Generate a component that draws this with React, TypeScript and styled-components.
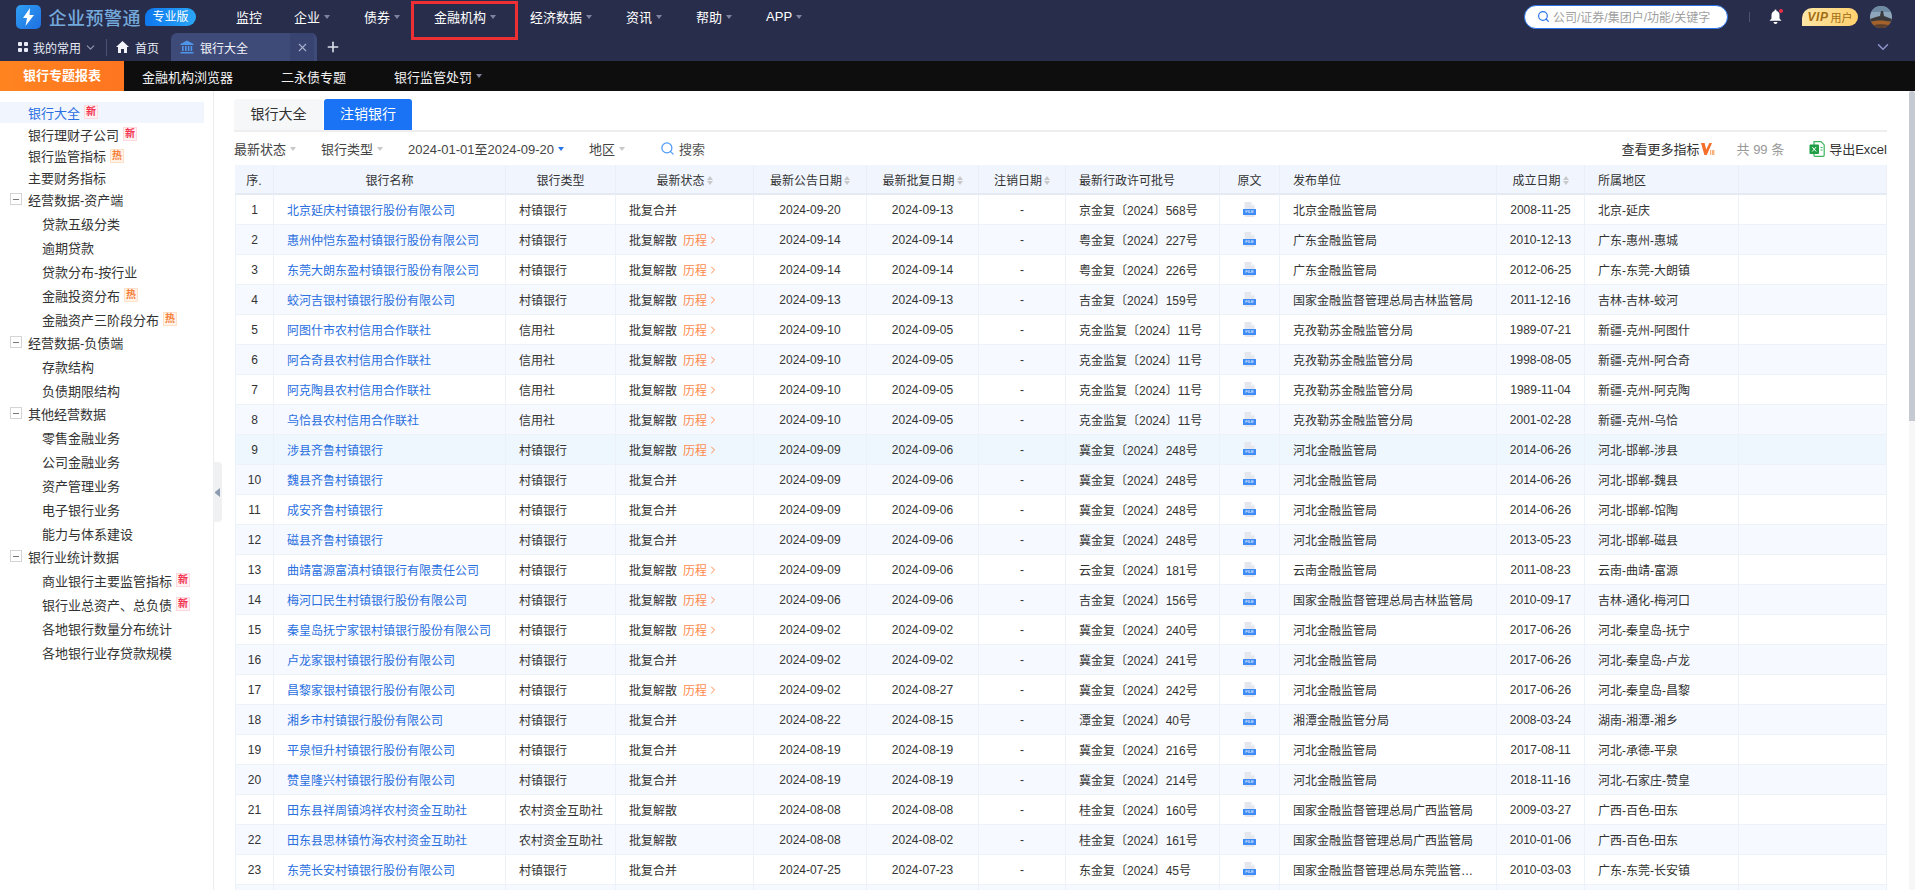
import React from "react";
import styled, { createGlobalStyle } from "styled-components";
import { ChevronDown, Plus, Search, X, ChevronRight } from "lucide-react";

const GlobalStyle = createGlobalStyle`
  *, *::before, *::after { box-sizing: border-box; }
  html, body { margin: 0; padding: 0; height: 100%; overflow: hidden; background: #fff; }
  body {
    font-family: "Liberation Sans", "Noto Sans CJK SC", sans-serif;
    font-size: 12px;
    color: #333;
  }
`;

const Page = styled.div`
  display: flex;
  flex-direction: column;
  height: 890px;
  overflow: hidden;
`;

const Header = styled.header`
  height: 61px;
  flex: none;
  background: #282d4b;
  display: flex;
  flex-direction: column;
`;

const TopRow = styled.div`
  height: 33px;
  display: flex;
  align-items: center;
  padding: 0 23px 0 16px;
`;

const Brand = styled.div`
  width: 180px;
  display: flex;
  align-items: center;
  margin-right: 40px;
`;

const LogoMark = styled.div`
  width: 25px;
  height: 24px;
  border-radius: 5px;
  background: linear-gradient(135deg, #2f9ff2, #1e6fe2);
  display: flex;
  align-items: center;
  justify-content: center;
  margin-right: 8px;
`;

const BrandName = styled.span`
  font-size: 18px;
  font-weight: 500;
  color: #74a9dc;
  letter-spacing: 0.5px;
  margin-right: 4px;
  white-space: nowrap;
`;

const Edition = styled.span`
  width: 52px;
  height: 18px;
  border-radius: 9px 9px 9px 2px;
  background: linear-gradient(90deg, #0e77ef, #2aa6f5);
  color: #fff;
  font-size: 12px;
  line-height: 18px;
  text-align: center;
`;

const NavItem = styled.div<{ $plain?: boolean; $boxed?: boolean }>`
  position: relative;
  display: flex;
  align-items: center;
  color: #fff;
  font-size: 13px;
  padding-right: ${(p) => (p.$plain ? "32px" : "34px")};
  ${(p) =>
    p.$boxed &&
    `&::after {
      content: "";
      position: absolute;
      left: -23px;
      top: -6px;
      width: 107px;
      height: 39px;
      border: 3px solid #ee2f34;
    }`}
`;

const Caret = styled.i<{ $color?: string }>`
  display: inline-block;
  width: 0;
  height: 0;
  margin-left: 4px;
  border-left: 3px solid transparent;
  border-right: 3px solid transparent;
  border-top: 4px solid ${(p) => p.$color || "#7e849e"};
  flex: none;
`;

const SearchBox = styled.div`
  margin-left: auto;
  width: 204px;
  height: 24px;
  border: 1.5px solid #2a74ea;
  border-radius: 12px;
  background: #fff;
  display: flex;
  align-items: center;
  padding-left: 12px;
  color: #a0a0a0;
  font-size: 12px;
  gap: 3px;
  white-space: nowrap;
`;

const HeadDivider = styled.span`
  width: 1px;
  height: 10px;
  background: #4a5278;
  margin: 0 19px 0 21px;
`;

const BellWrap = styled.span`
  position: relative;
  width: 13px;
  height: 16px;
  display: flex;
  margin-right: 20px;
  &::after {
    content: "";
    position: absolute;
    right: -1px;
    top: 0;
    width: 4px;
    height: 4px;
    border-radius: 50%;
    background: #f0304a;
  }
`;

const VipTag = styled.span`
  width: 56px;
  height: 18px;
  border-radius: 10px 9px 9px 0;
  background: linear-gradient(100deg, #ffe7a8, #ffd06c);
  color: #a26c12;
  display: flex;
  align-items: center;
  justify-content: center;
  gap: 2px;
  font-size: 11px;
  margin-right: 12px;
`;

const VipWord = styled.b`
  font-size: 12px;
  font-style: italic;
  letter-spacing: 0.5px;
`;

const TabRow = styled.div`
  height: 28px;
  display: flex;
  align-items: stretch;
  padding: 0 23px 0 18px;
  color: #e8ebf5;
  font-size: 12px;
`;

const TabLink = styled.div`
  display: flex;
  align-items: center;
`;

const GridIcon = styled.span`
  width: 10px;
  height: 10px;
  display: grid;
  grid-template-columns: 4px 4px;
  grid-auto-rows: 4px;
  gap: 2px;
  margin-right: 5px;
  & > i {
    background: #e8ebf5;
    border-radius: 1px;
  }
`;

const TabDivider = styled.span`
  align-self: center;
  width: 1px;
  height: 17px;
  background: #4a5278;
  margin: 0 9px 0 9px;
`;

const OpenTab = styled.div`
  width: 146px;
  margin-left: 12px;
  padding: 0 0 0 9px;
  border-radius: 6px 6px 0 0;
  background: #3e4a78;
  display: flex;
  align-items: center;
  gap: 6px;
  color: #f2f4fa;
`;

const TabClose = styled.span`
  margin-left: auto;
  width: 24px;
  height: 28px;
  display: flex;
  align-items: center;
  justify-content: center;
  color: #a9b1cd;
  margin-right: 3px;
  background: #384370;
`;

const AddTab = styled.span`
  display: flex;
  align-items: center;
  margin-left: 8px;
  color: #dfe2ee;
`;

const Collapse = styled.span`
  margin-left: auto;
  display: flex;
  align-items: center;
  color: #8d97cc;
`;

const SubBar = styled.nav`
  height: 30px;
  flex: none;
  background: #0e0e0e;
  display: flex;
  align-items: center;
  color: #f1f1f1;
  font-size: 13px;
`;

const SubActive = styled.div`
  width: 124px;
  height: 30px;
  background: linear-gradient(90deg, #ff8420, #ff7520);
  color: #fff;
  font-weight: 700;
  line-height: 30px;
  text-align: center;
  margin-right: 18px;
`;

const SubItem = styled.div<{ $gap?: number }>`
  display: flex;
  align-items: center;
  margin-right: ${(p) => p.$gap || 0}px;
`;

const Main = styled.div`
  flex: 1;
  min-height: 0;
  display: flex;
`;

const Sidebar = styled.aside`
  position: relative;
  width: 214px;
  flex: none;
  padding-top: 10.5px;
  border-right: 1px solid #ececec;
  font-size: 13px;
  color: #333;
`;

const Handle = styled.div`
  position: absolute;
  left: 100%;
  top: 371px;
  width: 9px;
  height: 60px;
  background: #f0f1f3;
  border-radius: 0 4px 4px 0;
  display: flex;
  align-items: center;
  justify-content: center;
  &::before {
    content: "";
    width: 5px;
    height: 9px;
    border-top: 4.5px solid transparent;
    border-bottom: 4.5px solid transparent;
    border-right: 5px solid #8c9bb0;
  }
`;

const TopItem = styled.div<{ $active?: boolean }>`
  height: 21.7px;
  width: 204px;
  display: flex;
  align-items: center;
  padding-left: 28px;
  background: ${(p) => (p.$active ? "#f1f5fe" : "transparent")};
  color: ${(p) => (p.$active ? "#2a6fe0" : "#333")};
`;

const GroupItem = styled.div`
  height: 21.7px;
  display: flex;
  align-items: center;
  padding-left: 10px;
`;

const Expander = styled.span`
  width: 12px;
  height: 12px;
  border: 1px solid #d4d4d4;
  margin-right: 6px;
  display: flex;
  align-items: center;
  justify-content: center;
  &::before {
    content: "";
    width: 6px;
    height: 1px;
    background: #777;
  }
`;

const ChildList = styled.div`
  padding-top: 1.3px;
`;

const ChildItem = styled.div`
  height: 24px;
  display: flex;
  align-items: center;
  padding-left: 42px;
`;

const Flag = styled.span<{ $hot?: boolean }>`
  width: 14px;
  height: 14px;
  margin-left: 4px;
  font-size: 10px;
  line-height: 12px;
  text-align: center;
  font-weight: 700;
  border: 1px solid ${(p) => (p.$hot ? "#ffe0c8" : "#ffd9de")};
  background: ${(p) => (p.$hot ? "#fff3e8" : "#fff0f2")};
  color: ${(p) => (p.$hot ? "#f4803a" : "#f2324f")};
`;

const Content = styled.section`
  flex: 1;
  min-width: 0;
  padding: 8px 22px 0 20px;
`;

const ViewTabs = styled.div`
  display: flex;
  height: 33px;
  gap: 1px;
  border-bottom: 2px solid #eee;
`;

const ViewTab = styled.div<{ $on?: boolean }>`
  width: ${(p) => (p.$on ? "88px" : "89px")};
  height: 31px;
  line-height: 31px;
  text-align: center;
  font-size: 14px;
  border-radius: 3px 3px 0 0;
  background: ${(p) => (p.$on ? "#1a73f5" : "#f6f7f9")};
  color: ${(p) => (p.$on ? "#fff" : "#333")};
`;

const Filters = styled.div`
  height: 33px;
  display: flex;
  align-items: center;
  font-size: 13px;
  color: #444;
`;

const Filter = styled.div`
  display: flex;
  align-items: center;
  margin-right: 25px;
`;

const SearchLink = styled.div`
  display: flex;
  align-items: center;
  gap: 4px;
  margin-left: 10px;
  color: #555;
`;

const FilterEnd = styled.div`
  margin-left: auto;
  display: flex;
  align-items: center;
  color: #333;
`;

const MoreLink = styled.span`
  display: flex;
  align-items: center;
  gap: 1px;
  margin-right: 22px;
`;

const Total = styled.span`
  color: #999;
  margin-right: 25px;
`;

const ExportLink = styled.span`
  display: flex;
  align-items: center;
  gap: 4px;
`;

const Table = styled.table`
  width: 1652px;
  margin-left: 1px;
  table-layout: fixed;
  border-collapse: separate;
  border-spacing: 0;
  font-size: 12px;
`;

const HeadCell = styled.th<{ $left?: boolean }>`
  height: 30px;
  padding: 0 ${(p) => (p.$left ? "13px" : "4px")};
  font-weight: 400;
  color: #333;
  background: #f1f6fe;
  text-align: ${(p) => (p.$left ? "left" : "center")};
  border-right: 1px solid #e9eef7;
  border-bottom: 2px solid #e4e9f2;
  white-space: nowrap;
`;

const Sort = styled.span`
  display: inline-flex;
  flex-direction: column;
  gap: 1px;
  margin-left: 2px;
  vertical-align: middle;
  position: relative;
  top: -1px;
  &::before, &::after {
    content: "";
    width: 6px;
    height: 4px;
    border-left: 3px solid transparent;
    border-right: 3px solid transparent;
  }
  &::before { border-bottom: 4px solid #c8c8c8; }
  &::after { border-top: 4px solid #c8c8c8; }
`;

const Row = styled.tr<{ $alt?: boolean; $hover?: boolean }>`
  background: ${(p) => (p.$hover ? "#eef7fd" : p.$alt ? "#f6f9ff" : "#fff")};
`;

const Cell = styled.td<{ $center?: boolean }>`
  height: 30px;
  padding: ${(p) => (p.$center ? "0 2px" : "0 12px 0 13px")};
  overflow: hidden;
  white-space: nowrap;
  text-overflow: ellipsis;
  color: #333;
  text-align: ${(p) => (p.$center ? "center" : "left")};
  border-right: 1px solid #edf1f8;
  border-bottom: 1px solid #edf1f8;
  &:first-child { border-left: 1px solid #edf1f8; }
`;

const BankLink = styled.a`
  color: #2a6fe0;
  text-decoration: none;
`;

const Trail = styled.span`
  display: inline-flex;
  align-items: center;
  margin-left: 6px;
  color: #ff8a4c;
  vertical-align: top;
`;

const ScrollTrack = styled.div`
  width: 6px;
  flex: none;
  margin-left: auto;
  background: #f7f7f7;
`;

const ScrollThumb = styled.div`
  height: 330px;
  background: #c4c9d2;
  border-radius: 3px 3px 0 0;
`;

const Avatar = () => (
  <svg width="22" height="22" viewBox="0 0 22 22">
    <defs>
      <clipPath id="avatar-clip">
        <circle cx="11" cy="11" r="11" />
      </clipPath>
    </defs>
    <g clipPath="url(#avatar-clip)">
      <rect width="22" height="22" fill="#8fa7ba" />
      <rect y="0" width="22" height="6" fill="#6f8ba3" />
      <path d="M0 13l6-2 4-1 1-5 2 0 1 5 8 3v9H0z" fill="#3a3a3c" />
      <path d="M0 16c5-2 14-2 22 0v6H0z" fill="#a3622c" />
      <path d="M4 19c4-1 10-1 14 0v3H4z" fill="#5a3f2e" />
    </g>
  </svg>
);

const FileIcon = () => (
  <svg width="13" height="15" viewBox="0 0 13 15" style={{ verticalAlign: "middle" }}>
    <path d="M1.5 0h6.5l3.5 3.5v10.7a.8.8 0 0 1-.8.8H2.3a.8.8 0 0 1-.8-.8z" fill="#e4e7ed" />
    <path d="M8 0l3.5 3.5H8z" fill="#f6f7f9" />
    <rect x="0" y="7" width="13" height="6" fill="#3f8cf6" />
    <text x="6.5" y="11.4" textAnchor="middle" fontSize="4" fill="#fff" fontFamily="Liberation Sans">FILE</text>
  </svg>
);

const sidebar = [
  { label: "银行大全", flag: "新", active: true },
  { label: "银行理财子公司", flag: "新" },
  { label: "银行监管指标", flag: "热" },
  { label: "主要财务指标" },
  {
    label: "经营数据-资产端",
    children: [
      { label: "贷款五级分类" },
      { label: "逾期贷款" },
      { label: "贷款分布-按行业" },
      { label: "金融投资分布", flag: "热" },
      { label: "金融资产三阶段分布", flag: "热" },
    ],
  },
  { label: "经营数据-负债端", children: [{ label: "存款结构" }, { label: "负债期限结构" }] },
  {
    label: "其他经营数据",
    children: [
      { label: "零售金融业务" },
      { label: "公司金融业务" },
      { label: "资产管理业务" },
      { label: "电子银行业务" },
      { label: "能力与体系建设" },
    ],
  },
  {
    label: "银行业统计数据",
    children: [
      { label: "商业银行主要监管指标", flag: "新" },
      { label: "银行业总资产、总负债", flag: "新" },
      { label: "各地银行数量分布统计" },
      { label: "各地银行业存贷款规模" },
    ],
  },
];

const columns = [
  { w: 39, t: "序." },
  { w: 232, t: "银行名称" },
  { w: 110, t: "银行类型" },
  { w: 138, t: "最新状态", sort: true },
  { w: 113, t: "最新公告日期", sort: true },
  { w: 112, t: "最新批复日期", sort: true },
  { w: 87, t: "注销日期", sort: true },
  { w: 154, t: "最新行政许可批号", left: true },
  { w: 60, t: "原文" },
  { w: 217, t: "发布单位", left: true },
  { w: 88, t: "成立日期", sort: true },
  { w: 154, t: "所属地区", left: true },
  { w: 148, t: "", left: true },
];

const V = "村镇银行";
const C = "信用社";
const M = "农村资金互助社";
const HE = "河北金融监管局";
const KZ = "克孜勒苏金融监管分局";
const JL = "国家金融监督管理总局吉林监管局";
const GX = "国家金融监督管理总局广西监管局";
const MERGE = "批复合并";
const CLOSE = "批复解散";

// name, type, status, has history link, notice, approval, permit, publisher, founded, region
const rows: [string, string, string, boolean, string, string, string, string, string, string][] = [
  ["北京延庆村镇银行股份有限公司", V, MERGE, false, "2024-09-20", "2024-09-13", "京金复〔2024〕568号", "北京金融监管局", "2008-11-25", "北京-延庆"],
  ["惠州仲恺东盈村镇银行股份有限公司", V, CLOSE, true, "2024-09-14", "2024-09-14", "粤金复〔2024〕227号", "广东金融监管局", "2010-12-13", "广东-惠州-惠城"],
  ["东莞大朗东盈村镇银行股份有限公司", V, CLOSE, true, "2024-09-14", "2024-09-14", "粤金复〔2024〕226号", "广东金融监管局", "2012-06-25", "广东-东莞-大朗镇"],
  ["蛟河吉银村镇银行股份有限公司", V, CLOSE, true, "2024-09-13", "2024-09-13", "吉金复〔2024〕159号", JL, "2011-12-16", "吉林-吉林-蛟河"],
  ["阿图什市农村信用合作联社", C, CLOSE, true, "2024-09-10", "2024-09-05", "克金监复〔2024〕11号", KZ, "1989-07-21", "新疆-克州-阿图什"],
  ["阿合奇县农村信用合作联社", C, CLOSE, true, "2024-09-10", "2024-09-05", "克金监复〔2024〕11号", KZ, "1998-08-05", "新疆-克州-阿合奇"],
  ["阿克陶县农村信用合作联社", C, CLOSE, true, "2024-09-10", "2024-09-05", "克金监复〔2024〕11号", KZ, "1989-11-04", "新疆-克州-阿克陶"],
  ["乌恰县农村信用合作联社", C, CLOSE, true, "2024-09-10", "2024-09-05", "克金监复〔2024〕11号", KZ, "2001-02-28", "新疆-克州-乌恰"],
  ["涉县齐鲁村镇银行", V, CLOSE, true, "2024-09-09", "2024-09-06", "冀金复〔2024〕248号", HE, "2014-06-26", "河北-邯郸-涉县"],
  ["魏县齐鲁村镇银行", V, MERGE, false, "2024-09-09", "2024-09-06", "冀金复〔2024〕248号", HE, "2014-06-26", "河北-邯郸-魏县"],
  ["成安齐鲁村镇银行", V, MERGE, false, "2024-09-09", "2024-09-06", "冀金复〔2024〕248号", HE, "2014-06-26", "河北-邯郸-馆陶"],
  ["磁县齐鲁村镇银行", V, MERGE, false, "2024-09-09", "2024-09-06", "冀金复〔2024〕248号", HE, "2013-05-23", "河北-邯郸-磁县"],
  ["曲靖富源富滇村镇银行有限责任公司", V, CLOSE, true, "2024-09-09", "2024-09-06", "云金复〔2024〕181号", "云南金融监管局", "2011-08-23", "云南-曲靖-富源"],
  ["梅河口民生村镇银行股份有限公司", V, CLOSE, true, "2024-09-06", "2024-09-06", "吉金复〔2024〕156号", JL, "2010-09-17", "吉林-通化-梅河口"],
  ["秦皇岛抚宁家银村镇银行股份有限公司", V, CLOSE, true, "2024-09-02", "2024-09-02", "冀金复〔2024〕240号", HE, "2017-06-26", "河北-秦皇岛-抚宁"],
  ["卢龙家银村镇银行股份有限公司", V, MERGE, false, "2024-09-02", "2024-09-02", "冀金复〔2024〕241号", HE, "2017-06-26", "河北-秦皇岛-卢龙"],
  ["昌黎家银村镇银行股份有限公司", V, CLOSE, true, "2024-09-02", "2024-08-27", "冀金复〔2024〕242号", HE, "2017-06-26", "河北-秦皇岛-昌黎"],
  ["湘乡市村镇银行股份有限公司", V, MERGE, false, "2024-08-22", "2024-08-15", "潭金复〔2024〕40号", "湘潭金融监管分局", "2008-03-24", "湖南-湘潭-湘乡"],
  ["平泉恒升村镇银行股份有限公司", V, MERGE, false, "2024-08-19", "2024-08-19", "冀金复〔2024〕216号", HE, "2017-08-11", "河北-承德-平泉"],
  ["赞皇隆兴村镇银行股份有限公司", V, MERGE, false, "2024-08-19", "2024-08-19", "冀金复〔2024〕214号", HE, "2018-11-16", "河北-石家庄-赞皇"],
  ["田东县祥周镇鸿祥农村资金互助社", M, CLOSE, false, "2024-08-08", "2024-08-08", "桂金复〔2024〕160号", GX, "2009-03-27", "广西-百色-田东"],
  ["田东县思林镇竹海农村资金互助社", M, CLOSE, false, "2024-08-08", "2024-08-02", "桂金复〔2024〕161号", GX, "2010-01-06", "广西-百色-田东"],
  ["东莞长安村镇银行股份有限公司", V, MERGE, false, "2024-07-25", "2024-07-23", "东金复〔2024〕45号", "国家金融监督管理总局东莞监管分局", "2010-03-03", "广东-东莞-长安镇"],
];

const navItems = ["企业", "债券", "金融机构", "经济数据", "资讯", "帮助", "APP"];

export default function App() {
  return (
    <Page>
      <GlobalStyle />
      <Header>
        <TopRow>
          <Brand>
            <LogoMark>
              <svg width="13" height="18" viewBox="0 0 13 18">
                <path d="M8 0L1 10h4l-1.5 8L12 7H7.5z" fill="#fff" />
              </svg>
            </LogoMark>
            <BrandName>企业预警通</BrandName>
            <Edition>专业版</Edition>
          </Brand>
          <NavItem $plain>监控</NavItem>
          {navItems.map((n) => (
            <NavItem key={n} $boxed={n === "金融机构"}>
              {n}
              <Caret />
            </NavItem>
          ))}
          <SearchBox>
            <Search size={13} color="#2a74ea" strokeWidth={2.2} />
            公司/证券/集团户/功能/关键字
          </SearchBox>
          <HeadDivider />
          <BellWrap>
            <svg width="13" height="16" viewBox="0 0 13 16">
              <path d="M6.5 0.5a1 1 0 0 1 1 1v.4c2 .5 3 2.2 3 4.1v3.5l2 2.3H.5l2-2.3V6c0-1.9 1-3.6 3-4.1v-.4a1 1 0 0 1 1-1z" fill="#fff" />
              <path d="M4.5 13h4a2 2 0 0 1-4 0z" fill="#fff" />
            </svg>
          </BellWrap>
          <VipTag>
            <VipWord>VIP</VipWord>用户
          </VipTag>
          <Avatar />
        </TopRow>
        <TabRow>
          <TabLink>
            <GridIcon>
              <i />
              <i />
              <i />
              <i />
            </GridIcon>
            我的常用
            <ChevronDown size={13} color="#9097ad" style={{ marginLeft: 3 }} />
          </TabLink>
          <TabDivider />
          <TabLink>
            <svg width="13" height="12" viewBox="0 0 13 12" style={{ marginRight: 6 }}>
              <path d="M6.5 0L13 6h-2v6H8V8H5v4H2V6H0z" fill="#f2f4fa" />
            </svg>
            首页
          </TabLink>
          <OpenTab>
            <svg width="14" height="14" viewBox="0 0 14 14" fill="#4f96ea">
              <path d="M7 .5L13.5 4v1H.5V4z" />
              <rect x="2" y="6" width="1.6" height="5" />
              <rect x="5" y="6" width="1.6" height="5" />
              <rect x="7.8" y="6" width="1.6" height="5" />
              <rect x="10.6" y="6" width="1.6" height="5" />
              <rect x="0.5" y="12" width="13" height="1.5" />
            </svg>
            银行大全
            <TabClose>
              <X size={13} />
            </TabClose>
          </OpenTab>
          <AddTab>
            <Plus size={16} strokeWidth={2.4} />
          </AddTab>
          <Collapse>
            <ChevronDown size={18} />
          </Collapse>
        </TabRow>
      </Header>
      <SubBar>
        <SubActive>银行专题报表</SubActive>
        <SubItem $gap={48}>金融机构浏览器</SubItem>
        <SubItem $gap={48}>二永债专题</SubItem>
        <SubItem>
          银行监管处罚
          <Caret />
        </SubItem>
      </SubBar>
      <Main>
        <Sidebar>
          {sidebar.map((s) =>
            s.children ? (
              <div key={s.label}>
                <GroupItem>
                  <Expander />
                  {s.label}
                </GroupItem>
                <ChildList>
                  {s.children.map((c) => (
                    <ChildItem key={c.label}>
                      {c.label}
                      {c.flag && <Flag $hot={c.flag === "热"}>{c.flag}</Flag>}
                    </ChildItem>
                  ))}
                </ChildList>
              </div>
            ) : (
              <TopItem key={s.label} $active={s.active}>
                {s.label}
                {s.flag && <Flag $hot={s.flag === "热"}>{s.flag}</Flag>}
              </TopItem>
            )
          )}
          <Handle />
        </Sidebar>
        <Content>
          <ViewTabs>
            <ViewTab>银行大全</ViewTab>
            <ViewTab $on>注销银行</ViewTab>
          </ViewTabs>
          <Filters>
            <Filter>
              最新状态
              <Caret $color="#c8c8c8" />
            </Filter>
            <Filter>
              银行类型
              <Caret $color="#c8c8c8" />
            </Filter>
            <Filter>
              2024-01-01至2024-09-20
              <Caret $color="#2a74ea" />
            </Filter>
            <Filter>
              地区
              <Caret $color="#c8c8c8" />
            </Filter>
            <SearchLink>
              <Search size={15} color="#4b9bf5" />
              搜索
            </SearchLink>
            <FilterEnd>
              <MoreLink>
                查看更多指标
                <svg width="14" height="14" viewBox="0 0 14 14">
                  <path d="M0 1h3.6l1.6 6.4L8.4 1H11L5.8 13H3.4z" fill="#f4702a" />
                  <rect x="9" y="8" width="1.3" height="5" fill="#f9b27e" />
                  <rect x="11" y="8" width="2.4" height="5" fill="#f9b27e" />
                </svg>
              </MoreLink>
              <Total>共 99 条</Total>
              <ExportLink>
                <svg width="16" height="16" viewBox="0 0 16 16">
                  <path d="M5 .7h7l3.2 3.2v10.4a1 1 0 0 1-1 1H6a1 1 0 0 1-1-1z" fill="#fff" stroke="#3db45c" strokeWidth="1.2" />
                  <rect x="0.5" y="3.5" width="9.5" height="9.5" rx="1" fill="#1f9e46" />
                  <path d="M3.2 6l4 4.5M7.2 6l-4 4.5" stroke="#fff" strokeWidth="1" />
                  <path d="M11.5 6.5h2M11.5 9h2" stroke="#3db45c" strokeWidth="1" />
                </svg>
                导出Excel
              </ExportLink>
            </FilterEnd>
          </Filters>
          <Table>
            <colgroup>
              {columns.map((c, i) => (
                <col key={i} width={c.w} />
              ))}
            </colgroup>
            <thead>
              <tr>
                {columns.map((c, i) => (
                  <HeadCell key={i} $left={c.left}>
                    {c.t}
                    {c.sort && <Sort />}
                  </HeadCell>
                ))}
              </tr>
            </thead>
            <tbody>
              {rows.map((r, i) => (
                <Row key={i} $alt={i % 2 === 1} $hover={i === 8}>
                  <Cell $center>{i + 1}</Cell>
                  <Cell>
                    <BankLink>{r[0]}</BankLink>
                  </Cell>
                  <Cell>{r[1]}</Cell>
                  <Cell>
                    {r[2]}
                    {r[3] && (
                      <Trail>
                        历程
                        <ChevronRight size={12} />
                      </Trail>
                    )}
                  </Cell>
                  <Cell $center>{r[4]}</Cell>
                  <Cell $center>{r[5]}</Cell>
                  <Cell $center>-</Cell>
                  <Cell>{r[6]}</Cell>
                  <Cell $center>
                    <FileIcon />
                  </Cell>
                  <Cell>{r[7]}</Cell>
                  <Cell $center>{r[8]}</Cell>
                  <Cell>{r[9]}</Cell>
                  <Cell />
                </Row>
              ))}
              <Row $alt>
                {columns.map((c) => (
                  <Cell key={c.t} />
                ))}
              </Row>
            </tbody>
          </Table>
        </Content>
        <ScrollTrack>
          <ScrollThumb />
        </ScrollTrack>
      </Main>
    </Page>
  );
}
